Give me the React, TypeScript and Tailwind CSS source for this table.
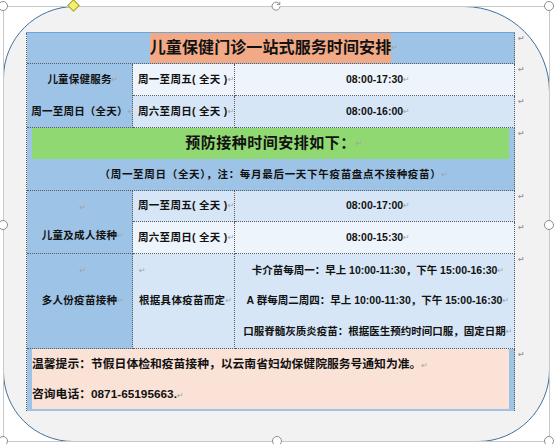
import React from 'react';

const FONT = "font-['Liberation_Sans','Noto_Sans_CJK_SC',sans-serif]";
const CELL = 'border-r border-b border-dotted border-[#5c5c5c]';
const MID_BLUE = 'bg-[#9dc3e6]';
const LIGHT_BLUE = 'bg-[#d6e6f6]';
const PALE_BLUE = 'bg-[#eef4fb]';

// paragraph mark, takes no width so centred text stays centred
function Mark() {
  return (
    <span className="inline-block w-0 overflow-visible whitespace-nowrap font-['DejaVu_Sans',sans-serif] text-[8px] font-normal tracking-normal text-[#a3a3a3]">
      ↵
    </span>
  );
}

function RowMarks() {
  const rows = [0, 1, 2, 3, 4, 5, 6, 7];
  return (
    <div className="grid grid-rows-[31px_32px_32px_63px_31px_32px_95px_62px] pt-[1px]">
      {rows.map((r) => (
        <div key={r} className="pl-[3px] pt-[1px] font-['DejaVu_Sans',sans-serif] text-[8px] leading-[10px] text-[#9b9b9b]">
          ↵
        </div>
      ))}
    </div>
  );
}

function ScheduleTable() {
  return (
    <div className={`flex ${FONT} font-bold text-[#111]`}>
      <div className="flex flex-col">
        <div className="h-[1px] bg-[#6ea5db]" />
        <div className="grid grid-cols-[106px_102px_280px] grid-rows-[31px_32px_32px_63px_31px_32px_95px_62px] border-l border-dotted border-[#5c5c5c]">
          {/* title */}
          <div className={`${CELL} ${MID_BLUE} col-span-3 flex items-center justify-center`}>
            <span className="bg-[#f2a986] text-[16px] leading-[30px] tracking-[0.1px]">
              儿童保健门诊一站式服务时间安排
            </span>
            <Mark />
          </div>

          {/* child health care */}
          <div className={`${CELL} ${MID_BLUE} row-span-2 flex flex-col text-[10.5px] tracking-[0.2px]`}>
            <div className="flex h-[32px] items-center justify-center">
              儿童保健服务
              <Mark />
            </div>
            <div className="flex h-[31px] items-center justify-center">
              周一至周日（全天）
              <Mark />
            </div>
          </div>
          <div className={`${CELL} ${PALE_BLUE} flex items-center pl-[5px] text-[10.5px] tracking-[0.3px]`}>
            周一至周五( 全天 )
            <Mark />
          </div>
          <div className={`${CELL} ${PALE_BLUE} flex items-center justify-center text-[10.5px]`}>
            08:00-17:30
            <Mark />
          </div>
          <div className={`${CELL} ${LIGHT_BLUE} flex items-center pl-[5px] text-[10.5px] tracking-[0.3px]`}>
            周六至周日( 全天 )
            <Mark />
          </div>
          <div className={`${CELL} ${LIGHT_BLUE} flex items-center justify-center text-[10.5px]`}>
            08:00-16:00
            <Mark />
          </div>

          {/* vaccination header */}
          <div className={`${CELL} ${MID_BLUE} col-span-3 flex flex-col px-[5px]`}>
            <div className="flex h-[31px] items-center justify-center bg-[#8fd872] text-[15px] tracking-[0.5px]">
              预防接种时间安排如下：
              <Mark />
            </div>
            <div className="flex flex-1 items-center justify-center text-[10.5px] tracking-[0.7px]">
              （周一至周日（全天），注：每月最后一天下午疫苗盘点不接种疫苗）
              <Mark />
            </div>
          </div>

          {/* children and adults */}
          <div className={`${CELL} ${MID_BLUE} row-span-2 flex flex-col justify-center text-[10.5px] tracking-[0.3px]`}>
            <div className="flex h-[28px] items-center justify-center">
              <Mark />
            </div>
            <div className="flex h-[28px] items-center justify-center">
              儿童及成人接种
              <Mark />
            </div>
          </div>
          <div className={`${CELL} ${LIGHT_BLUE} flex items-center pl-[5px] text-[10.5px] tracking-[0.3px]`}>
            周一至周五( 全天 )
            <Mark />
          </div>
          <div className={`${CELL} ${LIGHT_BLUE} flex items-center justify-center text-[10.5px]`}>
            08:00-17:00
            <Mark />
          </div>
          <div className={`${CELL} ${PALE_BLUE} flex items-center pl-[5px] text-[10.5px] tracking-[0.3px]`}>
            周六至周日( 全天 )
            <Mark />
          </div>
          <div className={`${CELL} ${PALE_BLUE} flex items-center justify-center text-[10.5px]`}>
            08:00-15:30
            <Mark />
          </div>

          {/* multi-dose vaccines */}
          <div className={`${CELL} ${MID_BLUE} flex flex-col pt-[2px] text-[10.5px] tracking-[0.3px]`}>
            <div className="flex h-[30px] items-center justify-center">
              <Mark />
            </div>
            <div className="flex h-[30px] items-center justify-center">
              多人份疫苗接种
              <Mark />
            </div>
          </div>
          <div className={`${CELL} ${LIGHT_BLUE} flex flex-col pl-[6px] pt-[2px] text-[10.5px] tracking-[0.3px]`}>
            <div className="flex h-[30px] items-center">
              <Mark />
            </div>
            <div className="flex h-[30px] items-center">
              根据具体疫苗而定
              <Mark />
            </div>
          </div>
          <div className={`${CELL} ${LIGHT_BLUE} flex flex-col justify-center text-[10.5px]`}>
            <div className="flex h-[30.5px] items-center justify-center">
              卡介苗每周一：早上 10:00-11:30，下午 15:00-16:30
              <Mark />
            </div>
            <div className="flex h-[30.5px] items-center justify-center">
              A 群每周二周四：早上 10:00-11:30，下午 15:00-16:30
              <Mark />
            </div>
            <div className="flex h-[30.5px] items-center justify-center">
              口服脊髓灰质炎疫苗：根据医生预约时间口服，固定日期
              <Mark />
            </div>
          </div>

          {/* notice */}
          <div className={`border-r border-dotted border-[#5c5c5c] ${MID_BLUE} col-span-3 flex px-[5px] pb-[2px]`}>
            <div className="flex-1 bg-[#fbe2d6] pt-[1px] text-[11.8px] leading-[29px]">
              <div>
                温馨提示：节假日体检和疫苗接种，以云南省妇幼保健院服务号通知为准。
                <Mark />
              </div>
              <div>
                咨询电话：0871-65195663.
                <Mark />
              </div>
            </div>
          </div>
        </div>
      </div>
      <RowMarks />
    </div>
  );
}

export default function App() {
  return (
    <div className="relative h-[444px] w-[554px] overflow-hidden bg-white">
      <div className="ml-[3px] mt-[6px] h-[436px] w-[547px] rounded-bl-[70px] rounded-br-[72px] rounded-tl-[72px] rounded-tr-[86px] border border-[#41719c] bg-[#f2f2f2] pl-[22px] pt-[25px]">
        <ScheduleTable />
      </div>

      {/* selection frame and handles */}
      <div className="absolute left-[3px] top-[6px] h-[436px] w-[547px] border border-[#c9c9c9]" />
      <div className="absolute left-[69px] top-[1px] h-[9px] w-[9px] rotate-45 border border-[#a09d3c] bg-[#f6f06c]" />
      <div className="absolute left-[-2px] top-[1px] h-[10px] w-[10px] rounded-full border border-[#8c8c8c] bg-white" />
      <div className="absolute left-[544px] top-[1px] h-[10px] w-[10px] rounded-full border border-[#8c8c8c] bg-white" />
      <div className="absolute left-[-2px] top-[220px] h-[10px] w-[10px] rounded-full border border-[#8c8c8c] bg-white" />
      <div className="absolute left-[544px] top-[220px] h-[10px] w-[10px] rounded-full border border-[#8c8c8c] bg-white" />
      <div className="absolute left-[-2px] top-[436px] h-[10px] w-[10px] rounded-full border border-[#8c8c8c] bg-white" />
      <div className="absolute left-[272px] top-[436px] h-[10px] w-[10px] rounded-full border border-[#8c8c8c] bg-white" />
      <div className="absolute left-[544px] top-[436px] h-[10px] w-[10px] rounded-full border border-[#8c8c8c] bg-white" />
      <svg className="absolute left-[270px] top-[0px]" width="12" height="12" viewBox="0 0 12 12">
        <path d="M9.5 4.2A4 4 0 1 0 10 6.5" fill="white" stroke="#8c8c8c" strokeWidth="1" />
        <path d="M9.8 1.8 L9.8 4.6 L7 4.6" fill="none" stroke="#8c8c8c" strokeWidth="1" />
      </svg>
    </div>
  );
}
